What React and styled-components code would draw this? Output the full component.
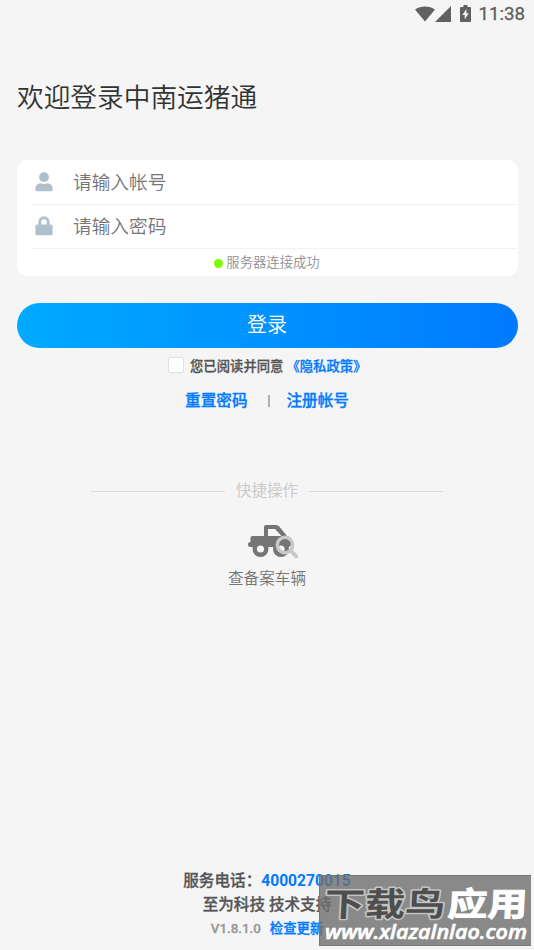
import styled, { createGlobalStyle } from "styled-components";

const GlobalStyle = createGlobalStyle`
  * {
    box-sizing: border-box;
  }
  body {
    margin: 0;
    background: #f5f5f5;
    font-family: Roboto, "Noto Sans CJK SC", sans-serif;
    font-weight: 350;
    color: #555;
  }
`;

const Page = styled.div`
  position: relative;
  display: flex;
  flex-direction: column;
  height: 950px;
  overflow: hidden;
  background: #f5f5f5;
`;

const StatusBar = styled.header`
  display: flex;
  justify-content: flex-end;
  align-items: center;
  height: 27px;
  padding-right: 9px;
  color: #616161;
`;

const Clock = styled.span`
  font-size: 18.7px;
  font-weight: 400;
  -webkit-text-stroke: 0.3px #616161;
  line-height: 27px;
  margin: 1px 0 0 7px;
`;

const Title = styled.h1`
  margin: 51px 0 0 17px;
  font-size: 26.7px;
  font-weight: 350;
  line-height: 40px;
  color: #333;
`;

const Card = styled.section`
  margin: 42px 16.5px 0;
  height: 116px;
  border-radius: 11px;
  background: #fff;
  overflow: hidden;
`;

const Field = styled.label`
  display: flex;
  align-items: center;
  height: ${({ $height }) => $height}px;
  margin-left: 15px;
  padding-left: 3.5px;
  border-bottom: 1px solid #f2f2f2;
  color: #b0c0ca;
  svg {
    margin-bottom: 1px;
  }
`;

const Input = styled.input`
  flex: 1;
  height: 40px;
  margin: 1px 0 0 20px;
  padding: 0;
  border: 0;
  outline: 0;
  background: transparent;
  font-family: inherit;
  font-weight: 350;
  font-size: 18.7px;
  &::placeholder {
    color: #757575;
    opacity: 1;
  }
`;

const ServerStatus = styled.div`
  display: flex;
  justify-content: center;
  align-items: center;
  gap: 3px;
  height: 27px;
  padding-bottom: 2px;
  font-size: 13.35px;
  color: #8f8f94;
`;

const Dot = styled.i`
  width: 9px;
  height: 9px;
  margin-top: 3px;
  border-radius: 50%;
  background: #7cfc00;
`;

const LoginButton = styled.button`
  height: 45px;
  margin: 27px 16.5px 0;
  padding: 0 0 4px;
  border: 0;
  border-radius: 23px;
  background: linear-gradient(90deg, #00aaff, #007aff);
  font-family: inherit;
  font-weight: 350;
  font-size: 20px;
  color: #fff;
`;

const Agreement = styled.div`
  display: flex;
  align-items: center;
  height: 20px;
  margin: 7px 0 0 168px;
  font-size: 13.35px;
  font-weight: 500;
  -webkit-text-stroke: 0.3px;
  color: #555;
`;

const Checkbox = styled.span`
  width: 16px;
  height: 16px;
  margin-right: 6px;
  border: 1px solid #dcdfe6;
  border-radius: 2px;
  background: #fff;
`;

const Link = styled.a`
  color: #007aff;
  font-weight: ${({ $bold }) => ($bold ? 700 : 500)};
  -webkit-text-stroke: ${({ $bold }) => ($bold ? 0 : "0.3px")};
`;

const PolicyLink = styled(Link)`
  margin-left: 3px;
`;

const Links = styled.nav`
  display: flex;
  justify-content: center;
  align-items: center;
  height: 24px;
  margin-top: 12px;
  font-size: 15.6px;
`;

const Separator = styled.i`
  width: 2px;
  height: 12px;
  margin: 3px 17px 0 20px;
  background: #b0b0b0;
`;

const Divider = styled.div`
  display: flex;
  align-items: center;
  gap: 11px;
  height: 24px;
  margin: 66px 91px 0;
  font-size: 15.6px;
  color: #c8c8c8;
  &::before,
  &::after {
    content: "";
    flex: 1;
    height: 1px;
    margin-top: 4px;
    background: #dcdcdc;
  }
`;

const Shortcut = styled.div`
  display: flex;
  flex-direction: column;
  align-items: center;
  margin-top: 22px;
  font-size: 15.6px;
  line-height: 24px;
  color: #757575;
  svg {
    margin: 0 0 8px 13px;
  }
`;

const Footer = styled.footer`
  display: flex;
  flex-direction: column;
  align-items: center;
  margin-top: auto;
  padding-bottom: 9px;
  font-size: 15.6px;
  font-weight: 500;
  line-height: 24px;
  -webkit-text-stroke: 0.3px;
`;

const Version = styled.div`
  display: flex;
  gap: 9px;
  font-size: 13.35px;
  color: #999;
`;

const Watermark = styled.div`
  position: absolute;
  left: 319px;
  top: 875px;
  width: 212px;
  height: 71px;
  border: 1px solid #777;
  border-width: 1px 0 1px 1px;
  background: rgba(110, 110, 110, 0.8);
  svg {
    display: block;
    overflow: visible;
  }
`;

const WifiIcon = () => (
  <svg width="20" height="16" viewBox="0 0 20 16" fill="currentColor">
    <path d="M0 3.6C5.5-.6 14.5-.6 20 3.6L10 15.5z" />
  </svg>
);

const SignalIcon = () => (
  <svg width="16" height="16" viewBox="0 0 16 16" fill="currentColor">
    <path d="M16 0v16H0z" />
  </svg>
);

const BatteryIcon = () => (
  <svg width="11" height="17" viewBox="0 0 11 17" style={{ marginLeft: 9 }}>
    <path fill="currentColor" d="M3.5 0h4v2H10q1 0 1 1v13q0 1-1 1H1q-1 0-1-1V3q0-1 1-1h2.5z" />
    <path fill="#f5f5f5" d="M6.5 4 2.3 10h2.4v4.5L8.8 8.3H6.4z" />
  </svg>
);

const UserIcon = () => (
  <svg width="18" height="20" viewBox="0 0 18 20" fill="currentColor">
    <circle cx="9" cy="5.2" r="4.9" />
    <path d="M5.5 11.2q3.5 1.6 7 0 5.2.4 5.2 6v.6q0 1.5-1.5 1.5H1.8q-1.5 0-1.5-1.5v-.6q0-5.6 5.2-6z" />
  </svg>
);

const LockIcon = () => (
  <svg width="18" height="20" viewBox="0 0 18 20">
    <path d="M4.8 9V6a4.2 4.2 0 0 1 8.4 0v3" fill="none" stroke="currentColor" strokeWidth="2.9" />
    <rect x=".4" y="8.4" width="17.2" height="10.9" rx="1.7" fill="currentColor" />
  </svg>
);

const TruckSearchIcon = () => (
  <svg width="52" height="36" viewBox="0 0 52 36">
    <path
      fill="#757575"
      fillRule="evenodd"
      d="M18 2h10q2 0 3.3 1.5L39 13q4 1 4 4v4q0 2-2 3H2q-2 0-2-2v-1q0-2 2.5-2v-4q0-2 2-2H16V4q0-2 2-2zM20 6v7h13.5L27 6z"
    />
    <circle cx="12.5" cy="26" r="5.8" fill="#f5f5f5" stroke="#757575" strokeWidth="4.4" />
    <circle cx="33" cy="26" r="5.8" fill="#f5f5f5" stroke="#757575" strokeWidth="4.4" />
    <circle cx="37" cy="22" r="7.7" fill="none" stroke="#c8c8c8" strokeWidth="3.5" />
    <path d="m43 28 5.3 5.3" stroke="#c8c8c8" strokeWidth="3.8" strokeLinecap="round" />
  </svg>
);

const WatermarkLogo = () => (
  <svg width="211" height="69" viewBox="0 0 211 69" fontFamily="Noto Sans CJK SC, sans-serif">
    <g transform="skewX(-3)" fontSize="33" fontWeight="700">
      <text
        x="6"
        y="40"
        textLength="121"
        lengthAdjust="spacingAndGlyphs"
        fill="#4e4e4e"
        stroke="#c4c4c4"
        strokeWidth="3"
        strokeLinejoin="round"
        paintOrder="stroke"
      >
        下载鸟
      </text>
      <text x="129" y="40" textLength="80" lengthAdjust="spacingAndGlyphs" fill="#fff" stroke="#fff" strokeWidth="0.9">
        应用
      </text>
    </g>
    <text
      x="5"
      y="63"
      fontFamily="Open Sans, sans-serif"
      fontSize="19"
      fontWeight="600"
      fontStyle="italic"
      textLength="202"
      lengthAdjust="spacingAndGlyphs"
      fill="#fff"
      stroke="#fff"
      strokeWidth="0.6"
    >
      www.xlazalnlao.com
    </text>
  </svg>
);

export default function App() {
  return (
    <>
      <GlobalStyle />
      <Page>
        <StatusBar>
          <WifiIcon />
          <SignalIcon />
          <BatteryIcon />
          <Clock>11:38</Clock>
        </StatusBar>

        <Title>欢迎登录中南运猪通</Title>

        <Card>
          <Field $height={45}>
            <UserIcon />
            <Input placeholder="请输入帐号" />
          </Field>
          <Field $height={44}>
            <LockIcon />
            <Input type="password" placeholder="请输入密码" />
          </Field>
          <ServerStatus>
            <Dot />
            服务器连接成功
          </ServerStatus>
        </Card>

        <LoginButton>登录</LoginButton>

        <Agreement>
          <Checkbox />
          您已阅读并同意
          <PolicyLink>《隐私政策》</PolicyLink>
        </Agreement>

        <Links>
          <Link>重置密码</Link>
          <Separator />
          <Link>注册帐号</Link>
        </Links>

        <Divider>快捷操作</Divider>

        <Shortcut>
          <TruckSearchIcon />
          查备案车辆
        </Shortcut>

        <Footer>
          <div>
            服务电话：<Link $bold>4000270015</Link>
          </div>
          <div>至为科技 技术支持</div>
          <Version>
            V1.8.1.0 <Link>检查更新</Link>
          </Version>
        </Footer>

        <Watermark>
          <WatermarkLogo />
        </Watermark>
      </Page>
    </>
  );
}
